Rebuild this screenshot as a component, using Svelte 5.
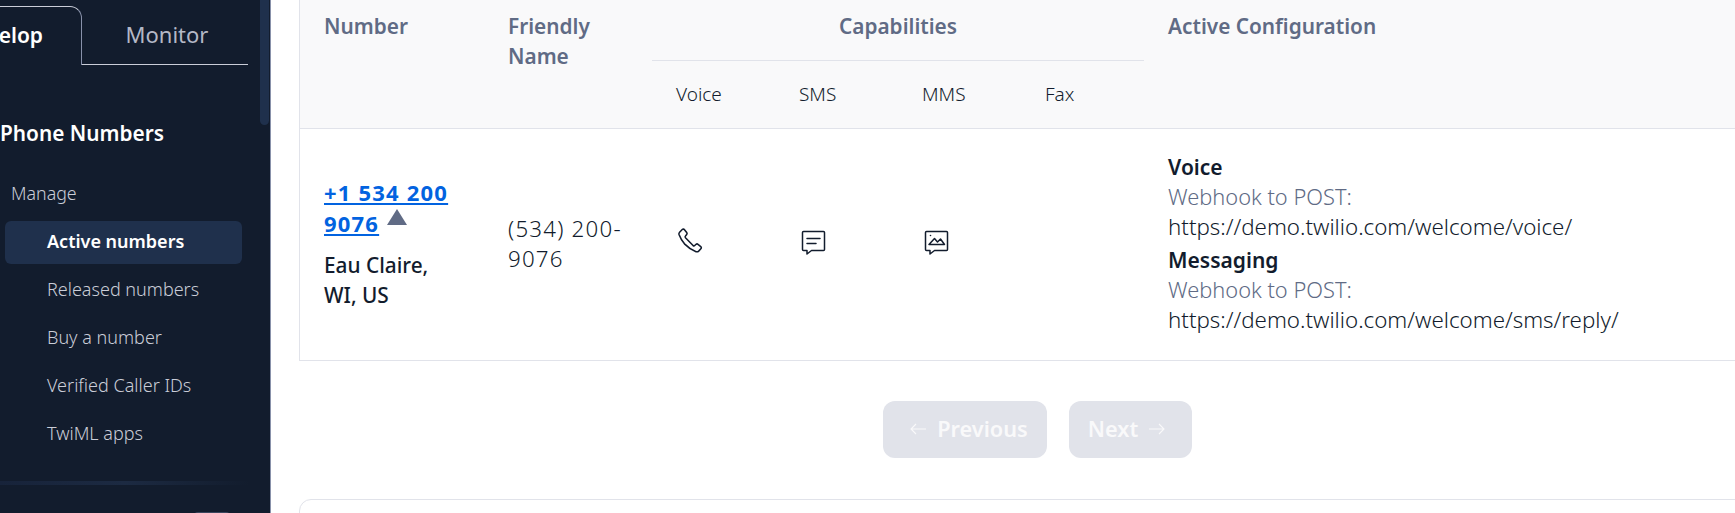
<script>
  const items = ['Released numbers', 'Buy a number', 'Verified Caller IDs', 'TwiML apps']
  const caps = ['Voice', 'SMS', 'MMS', 'Fax']
</script>

<div class="page">
  <aside class="sidebar">
    <div class="tabs">
      <div class="tab active"><span>Develop</span></div>
      <div class="tab">Monitor</div>
    </div>
    <h2>Phone Numbers</h2>
    <div class="group">Manage</div>
    <nav>
      <div class="link current">Active numbers</div>
      {#each items as item}
        <div class="link">{item}</div>
      {/each}
    </nav>
    <div class="divider"></div>
    <div class="peek"></div>
    <div class="scrollbar"></div>
  </aside>

  <main>
    <table>
      <colgroup>
        <col style="width: 184px" />
        <col style="width: 168px" />
        <col style="width: 123px" />
        <col style="width: 123px" />
        <col style="width: 123px" />
        <col style="width: 123px" />
        <col />
      </colgroup>
      <thead>
        <tr>
          <th rowspan="2">Number</th>
          <th rowspan="2">Friendly Name</th>
          <th colspan="4" class="caps-head">Capabilities</th>
          <th rowspan="2">Active Configuration</th>
        </tr>
        <tr>
          {#each caps as cap}
            <th class="cap">{cap}</th>
          {/each}
        </tr>
      </thead>
      <tbody>
        <tr>
          <td class="number">
            <div class="phone"><a href="#top">+1 534 200 9076</a><span class="warn"></span></div>
            <div class="place">Eau Claire, WI, US</div>
          </td>
          <td class="friendly">(534) 200-9076</td>
          <td class="icon-cell">
            <svg class="handset" width="29" height="29" viewBox="0 0 26 26" fill="none" stroke="#121c2d" stroke-width="1.4" stroke-linejoin="round">
              <path d="M3.2 5.6 5.6 3.2c.6-.6 1.5-.5 2 .1l2 2.6c.4.5.4 1.2 0 1.7L8.5 9c-.4.4-.4 1 0 1.5l6.8 7c.5.4 1.100.4 1.500 0l1.200-1.100c.5-.4 1.200-.4 1.700 0l2.500 2c.6.5.7 1.400.1 2l-2 2.100c-.6.6-1.500.8-2.300.5-3.900-1.500-7.500-4-10.400-7C5.300 13.100 3.700 10.300 2.700 7.600c-.2-.7 0-1.500.5-2Z" />
            </svg>
          </td>
          <td class="icon-cell">
            <svg width="26" height="26" viewBox="0 0 26 26" fill="none" stroke="#121c2d" stroke-width="1.500" stroke-linejoin="round" stroke-linecap="round">
              <path d="M3.500 2.500h20c.6 0 1 .4 1 1v17c0 .6-.4 1-1 1H11.500l-4.500 3.500v-3.500H3.500c-.6 0-1-.4-1-1v-17c0-.6.4-1 1-1Z" />
              <path d="M7 9.500h13M7 14.500h9" />
            </svg>
          </td>
          <td class="icon-cell">
            <svg width="26" height="26" viewBox="0 0 26 26" fill="none" stroke="#121c2d" stroke-width="1.500" stroke-linejoin="round" stroke-linecap="round">
              <path d="M3.500 2.500h20c.6 0 1 .4 1 1v17c0 .6-.4 1-1 1H11.500l-4.500 3.500v-3.500H3.500c-.6 0-1-.4-1-1v-17c0-.6.4-1 1-1Z" />
              <path d="m6 15.500 5.500-6 3 3.500 3-3 4 5.500Z" />
              <circle cx="7.500" cy="6.500" r=".8" fill="#121c2d" stroke="none" />
            </svg>
          </td>
          <td></td>
          <td class="config">
            <strong>Voice</strong>
            <span class="muted">Webhook to POST:</span>
            <span>https://demo.twilio.com/welcome/voice/</span>
            <strong class="second">Messaging</strong>
            <span class="muted">Webhook to POST:</span>
            <span>https://demo.twilio.com/welcome/sms/reply/</span>
          </td>
        </tr>
      </tbody>
    </table>

    <div class="pager">
      <button disabled class="prev">
        <svg width="20" height="20" viewBox="0 0 20 20" fill="none" stroke="currentColor" stroke-width="1.100"><path d="M18 10H3M8 5l-5 5 5 5" /></svg>
        Previous
      </button>
      <button disabled class="next">
        Next
        <svg width="20" height="20" viewBox="0 0 20 20" fill="none" stroke="currentColor" stroke-width="1.100"><path d="M2 10h15M12 5l5 5-5 5" /></svg>
      </button>
    </div>

    <div class="next-card"></div>
  </main>
</div>

<style>
  :global(body) {
    overflow: hidden;
    background: #fff;
  }

  .page {
    display: flex;
    width: 1735px;
    height: 513px;
    overflow: hidden;
    font-family: 'Noto Sans', sans-serif;
    color: #121c2d;
  }

  .sidebar {
    position: relative;
    flex: 0 0 271px;
    height: 513px;
    overflow: hidden;
    box-sizing: border-box;
    background: #121c2d;
    border-right: 1px solid #8891aa;
    color: #cacdd8;
  }

  .tabs {
    display: flex;
    width: 248px;
    height: 65px;
    padding-top: 6px;
    box-sizing: border-box;
  }

  .tab {
    flex: 0 0 166px;
    padding-left: 4px;
    text-align: center;
    font-size: 22px;
    line-height: 57px;
    border-bottom: 1px solid #cacdd8;
    box-sizing: border-box;
    height: 59px;
    color: #b4b8c6;
  }

  .tab.active {
    flex: 0 0 82px;
    padding-left: 0;
    position: relative;
    overflow: hidden;
    color: #fff;
    font-weight: 600;
    border: 1px solid #8891aa;
    border-top-color: #cacdd8;
    border-left: 0;
    border-bottom: 0;
    border-top-right-radius: 12px;
    font-size: 21px;
  }

  .tab.active span {
    position: absolute;
    right: 38px;
    white-space: nowrap;
  }

  h2 {
    margin: 53px 0 0;
    font-size: 20.800px;
    line-height: 30px;
    font-weight: 600;
    color: #fff;
  }

  .group {
    margin: 30px 0 0 11px;
    font-size: 17.800px;
    font-weight: 300;
    line-height: 30px;
  }

  nav {
    margin: 13px 0 0 5px;
    width: 237px;
  }

  .link {
    height: 48px;
    line-height: 40px;
    padding-left: 42px;
    font-size: 18px;
    font-weight: 300;
  }

  .link.current {
    height: 43px;
    margin-bottom: 5px;
    line-height: 41px;
    border-radius: 6px;
    background: #1f304c;
    color: #fff;
    font-weight: 600;
  }

  .divider {
    position: absolute;
    left: 0;
    top: 481px;
    width: 250px;
    height: 4px;
    background: linear-gradient(90deg, #17233a, #1c2a42 50%, #121c2d);
  }

  .peek {
    position: absolute;
    left: 194px;
    top: 512px;
    width: 36px;
    height: 4px;
    border-radius: 4px 4px 0 0;
    background: #3a465e;
  }

  .scrollbar {
    position: absolute;
    right: 1px;
    top: -10px;
    width: 9px;
    height: 135px;
    border-radius: 5px;
    background: #1f304c;
  }

  main {
    flex: 1;
    min-width: 0;
    padding-left: 28px;
    overflow: hidden;
  }

  table {
    width: 1500px;
    border-collapse: separate;
    border-spacing: 0;
    table-layout: fixed;
    border-left: 1px solid #e1e3ea;
    border-bottom: 1px solid #e1e3ea;
  }

  thead th {
    background: #f9f9fa;
    padding: 11px 24px 0;
    vertical-align: top;
    text-align: left;
    font-size: 20.800px;
    line-height: 30px;
    font-weight: 600;
    color: #606b85;
    border-bottom: 1px solid #e1e3ea;
  }

  thead th.caps-head {
    text-align: center;
    height: 61px;
    padding: 11px 0 0;
    box-sizing: border-box;
  }

  thead th.cap {
    height: 68px;
    padding: 18px 0 0 24px;
    box-sizing: border-box;
    font-size: 19px;
    font-weight: 300;
    color: #121c2d;
  }

  tbody td {
    height: 231px;
    padding: 0 24px;
    box-sizing: border-box;
    vertical-align: middle;
    font-size: 21px;
    line-height: 30px;
  }

  tbody td.number {
    padding-bottom: 2px;
  }

  .phone a {
    color: #0263e0;
    font-weight: 700;
    font-size: 22px;
    letter-spacing: 1.200px;
    text-decoration-thickness: 2px;
    text-underline-offset: 2px;
  }

  .warn {
    display: inline-block;
    width: 0;
    height: 0;
    margin-left: 8px;
    vertical-align: 7px;
    border: 10px solid transparent;
    border-top: 0;
    border-bottom: 16px solid #606b85;
  }

  .place {
    margin-top: 11px;
    font-weight: 500;
    font-size: 20.800px;
  }

  tbody td.friendly {
    font-size: 22.300px;
    font-weight: 300;
    letter-spacing: 1.200px;
    padding-bottom: 1px;
    color: #121c2d;
  }

  tbody td.icon-cell {
    padding: 0 0 6px 25px;
  }

  .icon-cell svg {
    display: block;
  }

  tbody td.icon-cell .handset {
    margin: 0 0 2px -1px;
  }

  tbody td.config {
    font-size: 22.300px;
    line-height: 30px;
    padding-bottom: 2px;
    white-space: nowrap;
  }

  .config strong,
  .config span {
    display: block;
  }

  .config strong {
    font-size: 21px;
    font-weight: 600;
  }

  .config .second {
    margin-top: 3px;
  }

  .config span {
    font-weight: 300;
  }

  .config .muted {
    font-size: 21.800px;
    color: #606b85;
  }

  .pager {
    display: flex;
    gap: 22px;
    margin: 40px 0 0 584px;
  }

  button {
    display: flex;
    align-items: center;
    justify-content: center;
    gap: 9px;
    height: 57px;
    border: 0;
    border-radius: 12px;
    background: #e1e3ea;
    color: #f9f9fa;
    font-family: inherit;
    font-size: 21.700px;
    font-weight: 600;
  }

  .prev {
    width: 164px;
    padding: 0 17px 2px 23px;
  }

  .next {
    width: 123px;
    padding: 0 24px 2px 18px;
  }

  .next-card {
    width: 1500px;
    height: 40px;
    margin-top: 41px;
    border: 1px solid #e1e3ea;
    border-radius: 12px 0 0 0;
    box-sizing: border-box;
  }
</style>
